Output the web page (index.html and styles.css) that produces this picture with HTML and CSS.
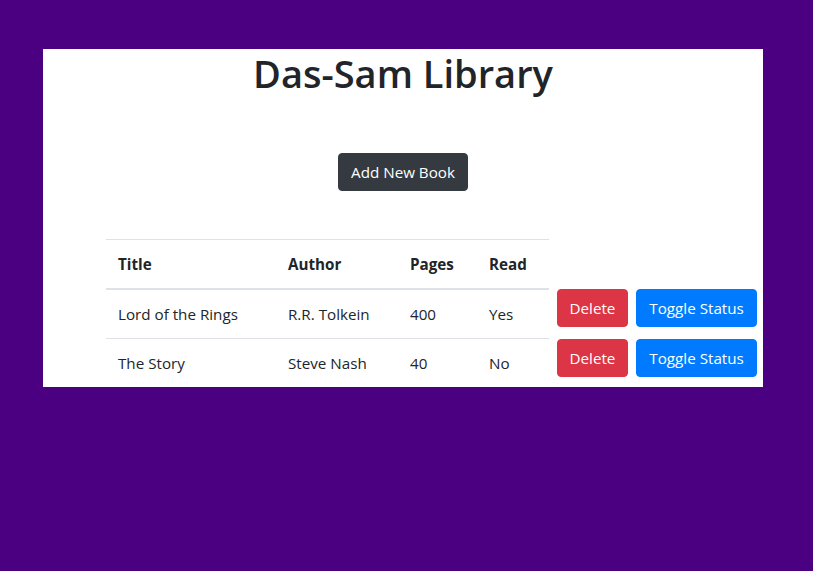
FILE: index.html
```html
<!DOCTYPE html>
<html lang="en">
<head>
<meta charset="utf-8">
<title>Das-Sam Library</title>
<link rel="stylesheet" href="styles.css">
</head>
<body>
<div class="container">
  <h1 class="title">Das-Sam Library</h1>
  <div class="add-row">
    <button class="btn btn-dark">Add New Book</button>
  </div>
  <table class="books">
    <thead>
      <tr>
        <th class="c-title">Title</th>
        <th class="c-author">Author</th>
        <th class="c-pages">Pages</th>
        <th class="c-read">Read</th>
        <th class="blank"></th>
        <th class="blank"></th>
      </tr>
    </thead>
    <tbody>
      <tr>
        <td>Lord of the Rings</td>
        <td>R.R. Tolkein</td>
        <td>400</td>
        <td>Yes</td>
        <td class="action"><button class="btn btn-danger">Delete</button></td>
        <td class="action"><button class="btn btn-primary">Toggle Status</button></td>
      </tr>
      <tr>
        <td>The Story</td>
        <td>Steve Nash</td>
        <td>40</td>
        <td>No</td>
        <td class="action"><button class="btn btn-danger">Delete</button></td>
        <td class="action"><button class="btn btn-primary">Toggle Status</button></td>
      </tr>
    </tbody>
  </table>
</div>
</body>
</html>
```
FILE: styles.css
```css
html, body {
  margin: 0;
  padding: 0;
}
body {
  background: #4b0082;
  font-family: "Open Sans", "Noto Sans", sans-serif;
  font-size: 15.2px;
  line-height: 24px;
  color: #212529;
}
.container {
  width: 720px;
  margin: 49px 0 0 43px;
  background: #fff;
}
.title {
  margin: 0 0 8px;
  font-size: 38px;
  font-weight: 600;
  line-height: 48px;
  text-align: center;
}
.add-row {
  display: flex;
  justify-content: center;
  padding: 48px 0 48px 0;
}
.btn {
  font-family: inherit;
  font-size: 15.2px;
  line-height: 24px;
  padding: 6px 12px;
  border: 1px solid transparent;
  border-radius: 4px;
  color: #fff;
  cursor: pointer;
}
.btn-dark { background: #343a40; border-color: #343a40; }
.btn-danger { background: #dc3545; border-color: #dc3545; padding: 6px 11.5px; }
.btn-primary { background: #007bff; border-color: #007bff; padding: 6px 12.5px; }
.books {
  border-collapse: collapse;
  margin-left: 63px;
}
.books th, .books td {
  padding: 12px;
  text-align: left;
  vertical-align: top;
  border-top: 1px solid #dee2e6;
  white-space: nowrap;
}
.books thead th {
  border-bottom: 2px solid #dee2e6;
  font-weight: 700;
}
.books th.blank {
  border: none;
  padding: 0;
}
.books td.action {
  border: none;
  padding: 0 0 0 8px;
}
.c-title { width: 146px; }
.c-author { width: 98px; }
.c-pages { width: 55px; }
.c-read { width: 48px; }
```
